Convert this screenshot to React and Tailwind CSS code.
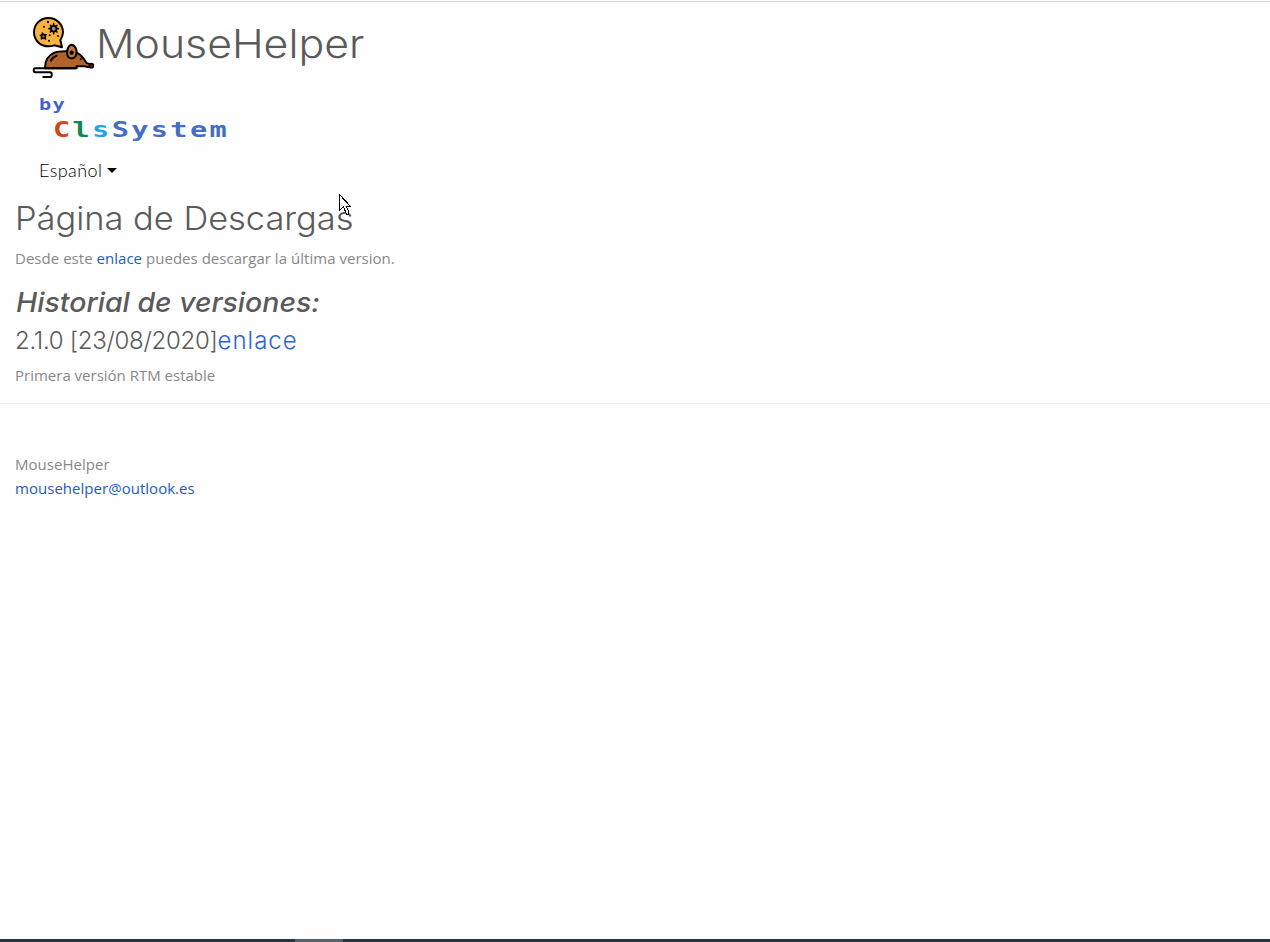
function MouseLogo() {
  return (
    <svg className="h-[76px] w-20 shrink-0" viewBox="0 0 240 228" fill="none" stroke="#000" strokeWidth="6" strokeLinecap="round" strokeLinejoin="round">
      <path d="M91 112C85 114 79 115 73 115C48 115 30 96 30 73C30 49 49 30 73 30C98 30 117 49 117 73C117 82 113 90 109 96L114 118Z" fill="#f9b43f" />
      <g fill="#000" stroke="none">
        <circle cx="72" cy="42" r="3.5" />
        <circle cx="60" cy="56" r="3" />
        <circle cx="77" cy="82" r="3" />
        <circle cx="102" cy="84" r="3" />
        <circle cx="75" cy="98" r="3" />
      </g>
      <circle cx="89" cy="62" r="8.5" fill="#968a94" strokeWidth="5" />
      <path d="M89 47v5M89 72v5M75 62h5M98 62h5M79 52l4 4M99 52l-4 4M79 72l4-4M99 72l-4-4" strokeWidth="5" />
      <circle cx="58" cy="85" r="6" fill="#b97c3b" strokeWidth="5" />
      <path d="M55 75l1 4M67 80l-4 2M49 82l4 1M52 93l3-3M65 93l-3-3" strokeWidth="4.5" />
      <path d="M63 179C63 158 73 142 91 134C104 128 125 129 141 130C168 132 179 151 187 164C192 168 201 166 206 173C202 180 191 176 181 175H158V181H63Z" fill="#b0642c" />
      <path d="M155 181H33C28 181 28 193 33 193H78C85 193 85 207 78 207H58" />
      <path d="M132 146C125 133 132 111 143 110C155 112 163 132 154 146C148 153 138 153 132 146Z" fill="#c87938" />
      <circle cx="143" cy="134" r="6" fill="#000" strokeWidth="1" />
      <circle cx="170" cy="154" r="3" fill="#000" stroke="none" />
      <path d="M81 158C84 151 90 146 98 143" />
      <circle cx="202" cy="173" r="6" fill="#642e27" strokeWidth="5" />
    </svg>
  );
}

function Pointer() {
  return (
    <svg className="absolute top-[193px] left-[339px] h-[21px] w-3" viewBox="0 0 12 21" shapeRendering="crispEdges">
      <path d="M.5.5V16.5L4.5 12.8L7.5 20H9.5V17.5L7.3 12.5H11.5Z" fill="#fff" stroke="#000" />
    </svg>
  );
}

export default function App() {
  return (
    <div className="relative flex h-[942px] w-full flex-col overflow-hidden border-t border-[#fefefe] bg-[#fefefe] font-['Open_Sans',sans-serif] text-[15px] leading-6 tracking-[0.03px] text-[#888]">
      <div className="h-px shrink-0 bg-[#d4d4d4]" />
      <header className="h-[188px] shrink-0 pt-[6px] pl-6">
        <div className="flex h-[76px]">
          <MouseLogo />
          <h1 className="-ml-[8px] origin-left scale-x-[1.097] pt-3 font-[Inter,sans-serif] text-[39px] leading-[48px] font-light tracking-[0px] whitespace-nowrap text-[#5a5a5a]">MouseHelper</h1>
        </div>
        <div className="pt-3 pl-[15px] font-['DejaVu_Sans_Mono',monospace] font-bold text-[#446dc4]">
          <div className="w-fit origin-left scale-x-[1.35] text-[15px] leading-[18px] tracking-[1px] text-[#4561c9]">by</div>
          <div className="ml-[14px] w-fit origin-left scale-x-[1.3] pt-[2px] text-[22px] leading-7 tracking-[1.8px] whitespace-nowrap">
            <span className="text-[#d1451b]">C</span>
            <span className="text-[#148653]">l</span>
            <span className="text-[#27a3e4]">s</span>
            <span>System</span>
          </div>
        </div>
        <button className="mt-[14px] ml-[15px] flex items-center gap-[5px] font-[Lato,sans-serif] text-[18px] leading-6 font-light tracking-[0.4px] text-black">
          Español
          <span className="border-x-[5px] border-t-[5px] border-x-transparent border-t-black" />
        </button>
      </header>
      <main className="h-[213px] shrink-0 px-[15px] pt-[9px]">
        <h2 className="w-fit origin-left scale-x-[1.075] font-[Inter,sans-serif] text-[32px] leading-[40px] font-light tracking-[0px] whitespace-nowrap text-[#5a5a5a]">Página de Descargas</h2>
        <p className="pt-[7px]">Desde este <a className="text-[#1c5dbd]">enlace</a> puedes descargar la última version.</p>
        <h3 className="mt-4 ml-px w-fit origin-left scale-x-[1.055] font-[Inter,sans-serif] text-[27px] leading-[34px] font-medium italic tracking-[0px] whitespace-nowrap text-[#5a5a5a]">Historial de versiones:</h3>
        <h4 className="mt-[6px] font-[Inter,sans-serif] text-[24px] leading-[30px] font-light tracking-[-0.3px] whitespace-nowrap text-[#5a5a5a]">2.1.0 [23/08/2020]<a className="tracking-[1px] text-[#2c66cc]">enlace</a></h4>
        <p className="pt-[7px] tracking-[0px]">Primera versión RTM estable</p>
      </main>
      <hr className="shrink-0 border-t border-[#ebebeb]" />
      <footer className="grow px-[15px] pt-12">
        <p>MouseHelper</p>
        <a className="text-[#1c5dbd]">mousehelper@outlook.es</a>
      </footer>
      <div className="h-[3px] shrink-0 bg-[#253541] pl-[295px]">
        <div className="h-full w-12 bg-[#56616c]" />
      </div>
      <Pointer />
    </div>
  );
}
